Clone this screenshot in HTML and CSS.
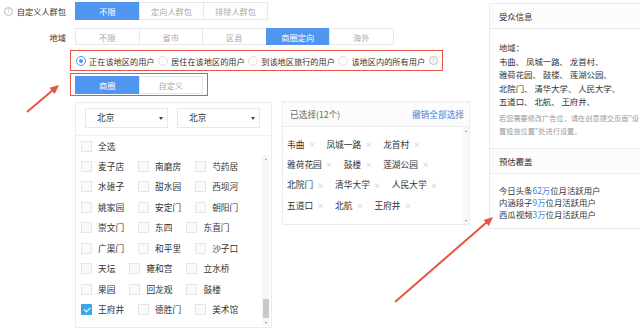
FILE: index.html
```html
<!DOCTYPE html>
<html lang="zh-CN">
  <head>
    <meta charset="utf-8">
    <title>定向设置</title>
    <link rel="stylesheet" href="styles.css">
  </head>
  <body>
    <div class="page">
      <div class="main">
        <div class="form-row">
          <div class="label"><span class="help">?</span>自定义人群包</div>
          <div class="btn-group">
            <span class="btn active">不限</span>
            <span class="btn">定向人群包</span>
            <span class="btn">排除人群包</span>
          </div>
        </div>

        <div class="form-row region-row">
          <div class="label">地域</div>
          <div class="btn-group">
            <span class="btn">不限</span>
            <span class="btn">省市</span>
            <span class="btn">区县</span>
            <span class="btn active">商圈定向</span>
            <span class="btn">海外</span>
          </div>
        </div>

        <div class="radio-box mark">
          <label class="radio checked"><span class="dot"></span>正在该地区的用户</label>
          <label class="radio"><span class="dot"></span>居住在该地区的用户</label>
          <label class="radio"><span class="dot"></span>到该地区旅行的用户</label>
          <label class="radio"><span class="dot"></span>该地区内的所有用户</label>
          <span class="help">?</span>
        </div>

        <div class="tab-box mark">
          <div class="btn-group">
            <span class="btn active">商圈</span>
            <span class="btn">自定义</span>
          </div>
        </div>

        <div class="panels">
          <div class="picker">
            <div class="picker-head">
              <div class="select">北京<i class="caret"></i></div>
              <div class="select">北京<i class="caret"></i></div>
            </div>
            <div class="check-all">
              <label class="check"><span class="box"></span>全选</label>
            </div>
            <div class="picker-body">
              <div class="check-list">
                <div class="check-row">
                  <label class="check"><span class="box"></span>麦子店</label>
                  <label class="check"><span class="box"></span>南磨房</label>
                  <label class="check"><span class="box"></span>芍药居</label>
                </div>
                <div class="check-row">
                  <label class="check"><span class="box"></span>水碓子</label>
                  <label class="check"><span class="box"></span>甜水园</label>
                  <label class="check"><span class="box"></span>西坝河</label>
                </div>
                <div class="check-row">
                  <label class="check"><span class="box"></span>姚家园</label>
                  <label class="check"><span class="box"></span>安定门</label>
                  <label class="check"><span class="box"></span>朝阳门</label>
                </div>
                <div class="check-row">
                  <label class="check"><span class="box"></span>崇文门</label>
                  <label class="check"><span class="box"></span>东四</label>
                  <label class="check"><span class="box"></span>东直门</label>
                </div>
                <div class="check-row">
                  <label class="check"><span class="box"></span>广渠门</label>
                  <label class="check"><span class="box"></span>和平里</label>
                  <label class="check"><span class="box"></span>沙子口</label>
                </div>
                <div class="check-row">
                  <label class="check"><span class="box"></span>天坛</label>
                  <label class="check"><span class="box"></span>雍和宫</label>
                  <label class="check"><span class="box"></span>立水桥</label>
                </div>
                <div class="check-row">
                  <label class="check"><span class="box"></span>果园</label>
                  <label class="check"><span class="box"></span>回龙观</label>
                  <label class="check"><span class="box"></span>鼓楼</label>
                </div>
                <div class="check-row">
                  <label class="check checked"><span class="box"></span>王府井</label>
                  <label class="check"><span class="box"></span>德胜门</label>
                  <label class="check"><span class="box"></span>美术馆</label>
                </div>
              </div>
              <div class="scrollbar">
                <span class="arrow up"></span>
                <span class="track"><span class="thumb"></span></span>
                <span class="arrow down"></span>
              </div>
            </div>
          </div>

          <div class="selected">
            <div class="selected-head">
              <span>已选择(12个)</span>
              <a class="link">撤销全部选择</a>
            </div>
            <div class="selected-body">
              <div class="tags">
                <span class="tag">韦曲<i>×</i></span>
                <span class="tag">凤城一路<i>×</i></span>
                <span class="tag">龙首村<i>×</i></span>
                <span class="tag">雅荷花园<i>×</i></span>
                <span class="tag">鼓楼<i>×</i></span>
                <span class="tag">莲湖公园<i>×</i></span>
                <span class="tag">北院门<i>×</i></span>
                <span class="tag">清华大学<i>×</i></span>
                <span class="tag">人民大学<i>×</i></span>
                <span class="tag">五道口<i>×</i></span>
                <span class="tag">北航<i>×</i></span>
                <span class="tag">王府井<i>×</i></span>
              </div>
              <div class="scrollbar small">
                <span class="arrow up"></span>
                <span class="track"></span>
                <span class="arrow down"></span>
              </div>
            </div>
          </div>
        </div>
      </div>

      <div class="side">
        <div class="side-head">受众信息</div>
        <div class="side-body">
          <div class="audience">
            <div>地域：</div>
            <div>韦曲、 凤城一路、 龙首村、</div>
            <div>雅荷花园、 鼓楼、 莲湖公园、</div>
            <div>北院门、 清华大学、 人民大学、</div>
            <div>五道口、 北航、 王府井、</div>
          </div>
          <p class="note">若您需要修改广告位，请在创意提交页面"设置投放位置"处进行设置。</p>
        </div>
        <div class="side-head">预估覆盖</div>
        <div class="side-body cover">
          <div>今日头条<em>62万</em>位月活跃用户</div>
          <div>内涵段子<em>9万</em>位月活跃用户</div>
          <div>西瓜视频<em>3万</em>位月活跃用户</div>
        </div>
      </div>
    </div>

    <!-- annotation arrows drawn over the screenshot -->
    <svg class="arrows" width="640" height="332" viewBox="0 0 640 332">
      <line x1="27" y1="112" x2="53" y2="90" />
      <polygon points="59,85 54.7,93.9 49.5,87.7" />
      <line x1="395" y1="302" x2="487" y2="222" />
      <polygon points="493,217 488.8,225.9 483.6,219.9" />
    </svg>
  </body>
</html>
```

FILE: styles.css
```css
body {
  margin: 0;
  padding: 0;
  width: 640px;
  height: 332px;
  overflow: hidden;
  background: #fff;
  font-family: "Noto Sans CJK SC", "Noto Sans", sans-serif;
  color: #333;
  position: relative;
}

.page {
  display: flex;
  align-items: flex-start;
  padding-top: 2px;
}

.main {
  width: 489px;
  flex: none;
}

/* form rows */
.form-row {
  display: flex;
  align-items: center;
}

.region-row {
  margin-top: 8px;
}

.label {
  width: 66px;
  margin-right: 9px;
  display: flex;
  align-items: center;
  justify-content: flex-end;
  font-size: 8.2px;
  color: #333;
  white-space: nowrap;
}

.label .help {
  margin-right: auto;
  margin-left: 4px;
}

.help {
  display: inline-flex;
  align-items: center;
  justify-content: center;
  width: 7px;
  height: 7px;
  border: 1px solid #bbb;
  border-radius: 50%;
  font-size: 6px;
  line-height: 1;
  color: #aaa;
}

.btn-group {
  display: flex;
}

.btn {
  display: flex;
  align-items: center;
  justify-content: center;
  box-sizing: border-box;
  width: 65px;
  height: 18px;
  border: 1px solid #e8e8e8;
  margin-left: -1px;
  font-size: 8.2px;
  color: #aaa;
  background: #fff;
}

.btn:first-child {
  margin-left: 0;
}

.region-row .btn {
  height: 17px;
  width: 64.5px;
}

.btn.active {
  background: #5096f0;
  border-color: #5096f0;
  color: #fff;
}

/* red annotation boxes */
.mark {
  border: 1px solid #e4584a;
  box-sizing: border-box;
  margin-left: 70px;
}

.radio-box {
  margin-top: 5px;
  width: 373px;
  height: 21px;
  display: flex;
  align-items: center;
  padding-left: 5px;
}

.radio {
  display: flex;
  align-items: center;
  margin-right: 3.5px;
  font-size: 8.2px;
  color: #333;
  white-space: nowrap;
}

.radio .dot {
  width: 8px;
  height: 8px;
  border: 1px solid #ddd;
  border-radius: 50%;
  margin-right: 3px;
  display: flex;
  align-items: center;
  justify-content: center;
}

.radio.checked .dot {
  border-color: #5096f0;
}

.radio.checked .dot::after {
  content: "";
  width: 4px;
  height: 4px;
  border-radius: 50%;
  background: #5096f0;
}

.tab-box {
  margin-top: 2px;
  width: 138px;
  height: 23px;
  padding: 2px 4px;
}

/* bottom panels */
.panels {
  display: flex;
  align-items: flex-start;
  gap: 10px;
  margin-top: 6px;
  margin-left: 75px;
}

.picker {
  width: 197px;
  height: 226px;
  box-sizing: border-box;
  border: 1px solid #ececec;
}

.picker-head {
  display: flex;
  gap: 9px;
  padding: 5px 9px 7px;
  border-bottom: 1px solid #efefef;
}

.select {
  position: relative;
  box-sizing: border-box;
  width: 83px;
  height: 20px;
  border: 1px solid #e8e8e8;
  padding-left: 11px;
  font-size: 8.7px;
  line-height: 18px;
  color: #333;
}

.caret {
  position: absolute;
  right: 4px;
  top: 8px;
  border-left: 2px solid transparent;
  border-right: 2px solid transparent;
  border-top: 3px solid #444;
}

.check-all {
  height: 20px;
  display: flex;
  align-items: center;
  padding-left: 5px;
}

.picker-body {
  display: flex;
}

.check-list {
  flex: 1;
  padding-left: 5px;
}

.check-row {
  display: flex;
  align-items: center;
  height: 20.5px;
}

.check {
  display: flex;
  align-items: center;
  margin-right: 14px;
  font-size: 8.7px;
  color: #333;
  white-space: nowrap;
}

.check .box {
  box-sizing: border-box;
  width: 11px;
  height: 11px;
  border: 1px solid #e6e6e6;
  background: #fafafa;
  margin-right: 6px;
  display: flex;
  align-items: center;
  justify-content: center;
}

.check.checked .box {
  background: #3ea8e6;
  border-color: #3ea8e6;
}

.check.checked .box::after {
  content: "";
  width: 5px;
  height: 2.5px;
  border-left: 1.5px solid #fff;
  border-bottom: 1.5px solid #fff;
  transform: translateY(-1px) rotate(-45deg);
}

/* fake scrollbars */
.scrollbar {
  width: 7px;
  height: 171px;
  margin-right: 2px;
  margin-top: -1px;
  display: flex;
  flex-direction: column;
  align-items: center;
  background: #f6f6f6;
}

.scrollbar .arrow {
  flex: none;
  height: 7px;
  display: flex;
  align-items: center;
}

.scrollbar .arrow::after {
  content: "";
  border-left: 1.5px solid transparent;
  border-right: 1.5px solid transparent;
}

.scrollbar .up::after {
  border-bottom: 2px solid #999;
}

.scrollbar .down::after {
  border-top: 2px solid #999;
}

.scrollbar .track {
  flex: 1;
  width: 100%;
  display: flex;
  flex-direction: column;
  justify-content: flex-end;
}

.scrollbar .thumb {
  height: 19px;
  margin: 0 0.5px 1px;
  background: #c9c9c9;
}

.selected {
  width: 188px;
  height: 124px;
  box-sizing: border-box;
  border: 1px solid #ececec;
  margin-top: -1px;
}

.selected-head {
  height: 24px;
  display: flex;
  align-items: center;
  justify-content: space-between;
  padding: 0 5px 0 7px;
  border-bottom: 1px solid #ececec;
  background: #fcfcfc;
  font-size: 8.7px;
  color: #666;
}

.link {
  color: #3e82d6;
}

.selected-body {
  display: flex;
}

.tags {
  flex: 1;
  display: flex;
  flex-wrap: wrap;
  align-content: flex-start;
  padding: 7px 0 0 4px;
}

.tag {
  display: flex;
  align-items: center;
  height: 20.3px;
  margin-right: 11px;
  font-size: 8.7px;
  color: #333;
  white-space: nowrap;
}

.tag i {
  font-style: normal;
  font-size: 7px;
  color: #bbb;
  margin-left: 4px;
}

.scrollbar.small {
  width: 6px;
  height: 97px;
  margin: 0;
  background: #f8f8f8;
}

/* right column */
.side {
  flex: 1;
  margin-top: 1px;
  border: 1px solid #ebebeb;
  border-right: none;
  font-size: 8.4px;
}

.side-head {
  height: 24px;
  display: flex;
  align-items: center;
  padding-left: 9px;
  border-bottom: 1px solid #ececec;
  background: #fcfcfc;
  color: #333;
}

.side-body {
  padding: 12px 0 9px 9px;
  border-bottom: 1px solid #ececec;
}

.side-body:last-child {
  border-bottom: none;
}

.audience {
  line-height: 13.6px;
  white-space: nowrap;
}

.note {
  margin: 3px 0 0;
  font-size: 7.2px;
  line-height: 13.5px;
  color: #999;
  line-break: anywhere;
}

.cover {
  padding-top: 10px;
  padding-bottom: 8px;
  line-height: 12px;
  white-space: nowrap;
}

.cover em {
  font-style: normal;
  color: #3e82d6;
}

.arrows {
  position: absolute;
  left: 0;
  top: 0;
  pointer-events: none;
}

.arrows line {
  stroke: #e8543f;
  stroke-width: 2;
}

.arrows polygon {
  fill: #e8543f;
}
```
